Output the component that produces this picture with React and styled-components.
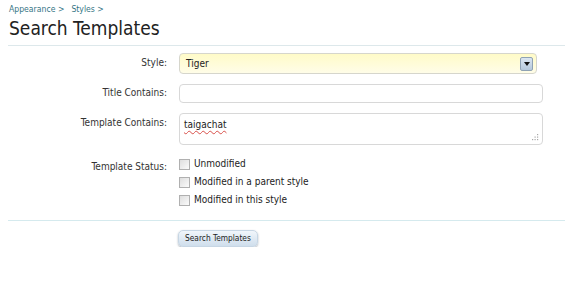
import React from "react";
import styled, { createGlobalStyle } from "styled-components";

const GlobalStyle = createGlobalStyle`
  html, body {
    margin: 0;
    padding: 0;
    background: #ffffff;
  }
  body {
    font-family: "DejaVu Sans Condensed", "DejaVu Sans", "Liberation Sans", sans-serif;
    color: #333;
  }
`;

const Page = styled.div`
  box-sizing: border-box;
  width: 565px;
  padding: 3px 0 0 8px;
`;

const Breadcrumb = styled.div`
  display: flex;
  gap: 7px;
  padding-left: 1px;
  font-size: 8.6px;
  line-height: 12px;
`;

const Crumb = styled.a`
  color: #357585;
  text-decoration: none;
`;

const Heading = styled.h1`
  margin: 1px 0 0;
  padding: 0 0 5px 1px;
  font-size: 19px;
  font-weight: normal;
  line-height: 24px;
  color: #222;
  border-bottom: 1px solid #dde8eb;
`;

const Form = styled.form`
  display: grid;
  grid-template-columns: 159px 1fr;
  column-gap: 12px;
  row-gap: 10px;
  padding: 7px 22px 0 0;
  font-size: 10px;
`;

const Label = styled.label`
  text-align: right;
  color: #333;
  line-height: 12px;
  padding-top: ${props => props.offset}px;
`;

const SelectBox = styled.div`
  box-sizing: border-box;
  width: 358px;
  height: 21px;
  display: flex;
  align-items: center;
  justify-content: space-between;
  padding: 0 3px 0 6px;
  border: 1px solid #d6d6cc;
  border-radius: 4px;
  background: linear-gradient(to bottom, #fffbc8, #fffde8);
  color: #222;
`;

const Arrow = styled.span`
  box-sizing: border-box;
  width: 13px;
  height: 14px;
  display: flex;
  align-items: center;
  justify-content: center;
  border: 1px solid #8fa2b4;
  border-radius: 2px;
  background: linear-gradient(to bottom, #dbe6f1, #b5c8db);

  &::after {
    content: "";
    border-left: 3px solid transparent;
    border-right: 3px solid transparent;
    border-top: 4px solid #111;
  }
`;

const TextInput = styled.div`
  box-sizing: border-box;
  height: ${props => props.height}px;
  position: relative;
  padding: 5px 4px;
  border: 1px solid #d8d8d8;
  border-radius: 4px;
  background: #fff;
  color: #222;
  line-height: 12px;
`;

const Squiggle = styled.span`
  text-decoration: underline wavy #d8504a;
  text-decoration-thickness: 1px;
  text-underline-offset: 2px;
`;

const Grip = styled.svg`
  position: absolute;
  right: 3px;
  bottom: 3px;
`;

const CheckList = styled.div`
  display: flex;
  flex-direction: column;
  gap: 6px;
  padding-top: 3px;
`;

const CheckRow = styled.label`
  display: flex;
  align-items: center;
  gap: 4px;
  line-height: 12px;
  color: #222;
`;

const Box = styled.span`
  box-sizing: border-box;
  width: 11px;
  height: 11px;
  border: 1px solid #b0b0b0;
  background: linear-gradient(to bottom right, #dedede, #fbfbfb);
`;

const Footer = styled.div`
  margin-top: 14px;
  border-top: 1px solid #d5eaee;
  padding: 5px 0 0 170px;
`;

const Button = styled.button`
  height: 17px;
  padding: 0 6px;
  border: 1px solid #c7d6e4;
  border-radius: 5px;
  background: linear-gradient(to bottom, #f1f6fb, #cfdeec);
  box-shadow: 0 1px 2px rgba(60, 80, 100, 0.45);
  font-family: inherit;
  font-size: 8.3px;
  color: #222;
  cursor: pointer;
`;

const statuses = ["Unmodified", "Modified in a parent style", "Modified in this style"];

export default function App() {
  return (
    <Page>
      <GlobalStyle />
      <Breadcrumb>
        <Crumb href="#">Appearance &gt;</Crumb>
        <Crumb href="#">Styles &gt;</Crumb>
      </Breadcrumb>
      <Heading>Search Templates</Heading>

      <Form onSubmit={e => e.preventDefault()}>
        <Label offset={4}>Style:</Label>
        <SelectBox>
          <span>Tiger</span>
          <Arrow />
        </SelectBox>

        <Label offset={3}>Title Contains:</Label>
        <TextInput height={19} />

        <Label offset={4}>Template Contains:</Label>
        <TextInput height={32}>
          <Squiggle>taigachat</Squiggle>
          <Grip width="7" height="7" viewBox="0 0 7 7">
            <g fill="#a8a8a8">
              <rect x="5" y="0" width="1.2" height="1.2" />
              <rect x="2.5" y="2.5" width="1.2" height="1.2" />
              <rect x="5" y="2.5" width="1.2" height="1.2" />
              <rect x="0" y="5" width="1.2" height="1.2" />
              <rect x="2.5" y="5" width="1.2" height="1.2" />
              <rect x="5" y="5" width="1.2" height="1.2" />
            </g>
          </Grip>
        </TextInput>

        <Label offset={6}>Template Status:</Label>
        <CheckList>
          {statuses.map(s => (
            <CheckRow key={s}>
              <Box />
              {s}
            </CheckRow>
          ))}
        </CheckList>
      </Form>

      <Footer>
        <Button type="button">Search Templates</Button>
      </Footer>
    </Page>
  );
}
